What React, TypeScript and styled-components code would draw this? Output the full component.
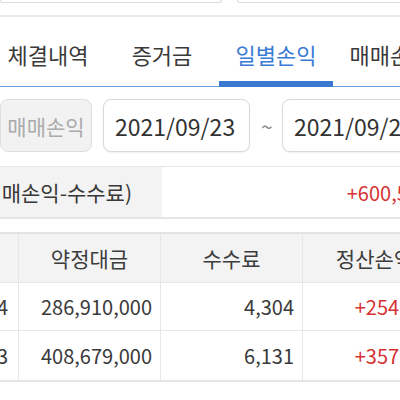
import styled, { createGlobalStyle } from "styled-components";

const GlobalStyle = createGlobalStyle`
  html, body {
    margin: 0;
    padding: 0;
    background: #ffffff;
    overflow: hidden;
  }
  body {
    font-family: "Noto Sans CJK KR", "Noto Sans", sans-serif;
    color: #383838;
  }
`;

const tabs = ["체결내역", "증거금", "일별손익", "매매손익"];

const rows = [
  { date: "2021/09/24", amount: "286,910,000", fee: "4,304", profit: "+254,716" },
  { date: "2021/09/23", amount: "408,679,000", fee: "6,131", profit: "+357,348" },
];

export default function App() {
  return (
    <>
      <GlobalStyle />
      <Page>
        <TopStrip>
          <TopBox $width={222} />
          <TopBox $width={209} />
        </TopStrip>

        <TabBar>
          {tabs.map((t) => (
            <Tab key={t} $active={t === "일별손익"}>
              {t}
            </Tab>
          ))}
        </TabBar>

        <FilterRow>
          <KindButton>매매손익</KindButton>
          <DateBox>2021/09/23</DateBox>
          <Tilde>~</Tilde>
          <DateBox>2021/09/24</DateBox>
        </FilterRow>

        <SummaryRow>
          <SummaryLabel>
            <span>정산손익(매매손익-수수료)</span>
          </SummaryLabel>
          <SummaryValue>+600,592</SummaryValue>
        </SummaryRow>

        <Table>
          <HeadCell $clip />
          <HeadCell>약정대금</HeadCell>
          <HeadCell>수수료</HeadCell>
          <HeadCell>정산손익</HeadCell>
          {rows.map((r, i) => (
            <Row key={r.date} $tall={i === rows.length - 1}>
              <Cell $clip>
                <span>{r.date}</span>
              </Cell>
              <Cell>{r.amount}</Cell>
              <Cell>{r.fee}</Cell>
              <Cell $red>{r.profit}</Cell>
            </Row>
          ))}
        </Table>
      </Page>
    </>
  );
}

const Page = styled.div`
  width: 446px;
  display: flex;
  flex-direction: column;
`;

const TopStrip = styled.div`
  display: flex;
  gap: 15px;
  height: 15px;
  border-bottom: 2px solid #e9e9e9;
`;

const TopBox = styled.div<{ $width: number }>`
  width: ${(p) => p.$width}px;
  height: 3px;
  box-sizing: border-box;
  border: 1px solid #dcdcdc;
  border-top: none;
  border-radius: 0 0 7px 7px;
`;

const TabBar = styled.div`
  display: flex;
  height: 69px;
  margin-left: -9px;
  border-bottom: 1px solid #6f9fe0;
`;

const Tab = styled.div<{ $active?: boolean }>`
  position: relative;
  flex-shrink: 0;
  width: 114px;
  display: flex;
  align-items: center;
  justify-content: center;
  padding-top: 5px;
  font-size: 22px;
  white-space: nowrap;
  color: ${(p) => (p.$active ? "#3a7bd5" : "#3a3a3a")};

  &::after {
    content: "";
    display: ${(p) => (p.$active ? "block" : "none")};
    position: absolute;
    left: 0;
    right: 0;
    bottom: -1px;
    height: 6px;
    background: #3a78d2;
  }
`;

const FilterRow = styled.div`
  display: flex;
  align-items: center;
  gap: 11px;
  margin-top: 12px;
  height: 53px;
`;

const KindButton = styled.div`
  flex-shrink: 0;
  width: 92px;
  height: 53px;
  box-sizing: border-box;
  display: flex;
  align-items: center;
  justify-content: center;
  border: 1px solid #dedede;
  border-radius: 8px;
  background: #f2f2f2;
  color: #ababab;
  font-size: 21px;
  white-space: nowrap;
`;

const DateBox = styled.div`
  flex-shrink: 0;
  width: 147px;
  height: 53px;
  box-sizing: border-box;
  display: flex;
  align-items: center;
  padding-left: 11px;
  border: 1px solid #d9d9d9;
  border-radius: 8px;
  background: #ffffff;
  box-shadow: 0 1px 2px rgba(0, 0, 0, 0.06);
  color: #333333;
  font-size: 23px;
  white-space: nowrap;
`;

const Tilde = styled.span`
  color: #8a8a8a;
  font-size: 21px;
  width: 10px;
  text-align: center;
`;

const SummaryRow = styled.div`
  display: grid;
  grid-template-columns: 162px 1fr;
  margin-top: 14px;
  height: 53px;
  box-sizing: border-box;
  border-top: 1px solid #e6e6e6;
  border-bottom: 2px solid #e6e6e6;
`;

const SummaryLabel = styled.div`
  display: flex;
  align-items: center;
  justify-content: flex-end;
  overflow: hidden;
  padding-right: 30px;
  background: #f3f3f3;
  font-size: 21px;
  color: #383838;

  span {
    flex-shrink: 0;
    white-space: nowrap;
  }
`;

const SummaryValue = styled.div`
  display: flex;
  align-items: center;
  justify-content: flex-end;
  padding-right: 16px;
  color: #d53232;
  font-size: 20px;
  white-space: nowrap;
`;

const Table = styled.div`
  display: grid;
  grid-template-columns: 18px 142px 142px 1fr;
  grid-template-rows: 48px;
  margin-top: 13px;
  border-top: 2px solid #e3e3e3;
  border-bottom: 2px solid #e6e6e6;
`;

const Row = styled.div<{ $tall?: boolean }>`
  display: contents;

  & > div {
    height: ${(p) => (p.$tall ? 50 : 48)}px;
    border-top: 1px solid #e6e6e6;
  }
`;

const CellBase = styled.div<{ $clip?: boolean }>`
  display: flex;
  align-items: center;
  box-sizing: border-box;
  white-space: nowrap;
  overflow: hidden;
  border-left: ${(p) => (p.$clip ? "none" : "1px solid #e6e6e6")};

  span {
    flex-shrink: 0;
  }
`;

const HeadCell = styled(CellBase)`
  justify-content: center;
  background: #f3f3f3;
  color: #3c3c3c;
  font-size: 21px;
`;

const Cell = styled(CellBase)<{ $red?: boolean }>`
  justify-content: flex-end;
  padding-right: ${(p) => (p.$clip ? "10px" : "8px")};
  color: ${(p) => (p.$red ? "#d53232" : "#3a3a3a")};
  font-size: 20px;
`;
